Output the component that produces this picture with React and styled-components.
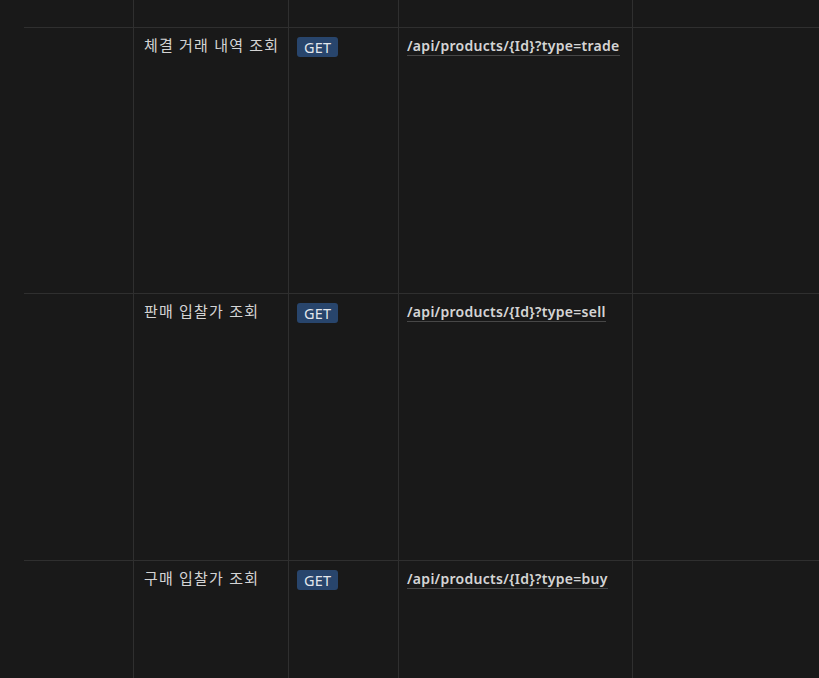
import styled, { createGlobalStyle } from 'styled-components';

const GlobalStyle = createGlobalStyle`
  html, body {
    margin: 0;
    padding: 0;
    background: #191919;
    overflow: hidden;
  }
  body {
    font-family: "Noto Sans", "Noto Sans CJK KR", sans-serif;
    color: rgba(255, 255, 255, 0.81);
  }
`;

const Page = styled.div`
  width: 819px;
  height: 678px;
  overflow: hidden;
  background: #191919;
`;

const Table = styled.div`
  margin-left: 24px;
  width: 1000px;
`;

const Row = styled.div`
  display: grid;
  grid-template-columns: 110px 155px 110px 234px 1fr;
  height: ${({ $h }) => $h}px;
  border-bottom: 1px solid #2f2f2f;
`;

const Cell = styled.div`
  border-right: ${({ $last }) => ($last ? 'none' : '1px solid #2f2f2f')};
  padding: ${({ $pad }) => $pad || '8px 8px'};
  font-size: 14px;
  line-height: 20px;
  min-width: 0;
`;

const Title = styled.span`
  color: rgba(255, 255, 255, 0.83);
  font-size: 15px;
  letter-spacing: 1.2px;
  white-space: nowrap;
`;

const Badge = styled.span`
  display: inline-flex;
  align-items: center;
  height: 20px;
  margin-top: 1px;
  padding: 0 7px;
  border-radius: 3px;
  background: #28456c;
  color: rgba(255, 255, 255, 0.88);
  font-size: 14.5px;
  letter-spacing: 0.2px;
`;

const Path = styled.span`
  font-weight: 600;
  font-size: 14px;
  color: rgba(255, 255, 255, 0.84);
  white-space: nowrap;
  border-bottom: 1px solid rgba(255, 255, 255, 0.2);
  letter-spacing: 0.28px;
`;

const ROWS = [
  { title: '체결 거래 내역 조회', method: 'GET', path: '/api/products/{Id}?type=trade', h: 265 },
  { title: '판매 입찰가 조회', method: 'GET', path: '/api/products/{Id}?type=sell', h: 266 },
  { title: '구매 입찰가 조회', method: 'GET', path: '/api/products/{Id}?type=buy', h: 266 },
];

export default function App() {
  return (
    <Page>
      <GlobalStyle />
      <Table>
        <Row $h={27}>
          <Cell />
          <Cell />
          <Cell />
          <Cell />
          <Cell $last />
        </Row>
        {ROWS.map((r) => (
          <Row key={r.path} $h={r.h}>
            <Cell />
            <Cell $pad="7px 10px">
              <Title>{r.title}</Title>
            </Cell>
            <Cell>
              <Badge>{r.method}</Badge>
            </Cell>
            <Cell>
              <Path>{r.path}</Path>
            </Cell>
            <Cell $last />
          </Row>
        ))}
      </Table>
    </Page>
  );
}
